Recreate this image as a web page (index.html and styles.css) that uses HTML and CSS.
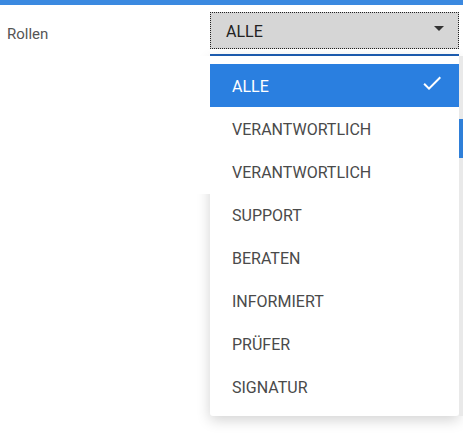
FILE: index.html
```html
<!DOCTYPE html>
<html>
<head>
<meta charset="utf-8">
<link rel="stylesheet" href="styles.css">
</head>
<body>
<div class="topbar"></div>
<div class="field">
  <label class="label">Rollen</label>
  <div class="control">
    <div class="select">
      <span class="value">ALLE</span>
      <span class="caret"></span>
    </div>
    <div class="underline"></div>
  </div>
</div>
<div class="cover"></div>
<div class="menu">
  <div class="item active"><span>ALLE</span>
    <svg class="check" width="24" height="24" viewBox="0 0 24 24"><path d="M9 16.17L4.83 12l-1.42 1.41L9 19 21 7l-1.41-1.41z" fill="#fff"/></svg>
  </div>
  <div class="item"><span>VERANTWORTLICH</span></div>
  <div class="item"><span>VERANTWORTLICH</span></div>
  <div class="item"><span>SUPPORT</span></div>
  <div class="item"><span>BERATEN</span></div>
  <div class="item"><span>INFORMIERT</span></div>
  <div class="item"><span>PRÜFER</span></div>
  <div class="item"><span>SIGNATUR</span></div>
</div>
<div class="track"><div class="thumb"></div></div>
</body>
</html>
```
FILE: styles.css
```css
html, body {
  margin: 0;
  padding: 0;
  background: #fff;
  font-family: Roboto, "Liberation Sans", sans-serif;
}
.topbar {
  height: 5px;
  background: #3b89e0;
}
.field {
  display: flex;
  align-items: flex-start;
  padding: 7px 0 0 7px;
}
.label {
  width: 203px;
  font-size: 15px;
  color: #555;
  line-height: 37px;
  margin-top: 4px;
}
.control {
  width: 249px;
  display: flex;
  flex-direction: column;
  gap: 5px;
}
.select {
  height: 35px;
  background: #d6d6d6;
  border: 1px dotted #222;
  display: flex;
  align-items: center;
  justify-content: space-between;
  padding: 0 14px 0 15px;
  font-size: 16px;
  color: #222;
}
.value {
  padding-top: 1px;
}
.caret {
  width: 0;
  height: 0;
  border-left: 5px solid transparent;
  border-right: 5px solid transparent;
  border-top: 5px solid #333;
  margin-top: -4px;
}
.underline {
  height: 2px;
  background: #1e5fb4;
}
.menu {
  position: absolute;
  left: 210px;
  top: 56px;
  width: 249px;
  padding: 8px 0;
  background: #fff;
  border-radius: 0 0 3px 3px;
  box-shadow: 0 4px 14px rgba(0,0,0,0.18);
  z-index: 1;
}
.item {
  height: 43px;
  display: flex;
  align-items: center;
  justify-content: space-between;
  padding: 2px 15px 0 22px;
  box-sizing: border-box;
  font-size: 16px;
  color: #4a4a4a;
}
.item.active {
  background: #2a7fe0;
  color: #fff;
}
.check {
  margin-top: -8px;
}
.cover {
  position: absolute;
  left: 0;
  top: 56px;
  width: 210px;
  height: 138px;
  background: #fff;
  z-index: 2;
}
.track {
  position: absolute;
  left: 459px;
  top: 56px;
  width: 4px;
  height: 360px;
  background: #e9e9e9;
  z-index: 2;
}
.thumb {
  margin-top: 63px;
  height: 39px;
  background: #2f7fd8;
}
```
